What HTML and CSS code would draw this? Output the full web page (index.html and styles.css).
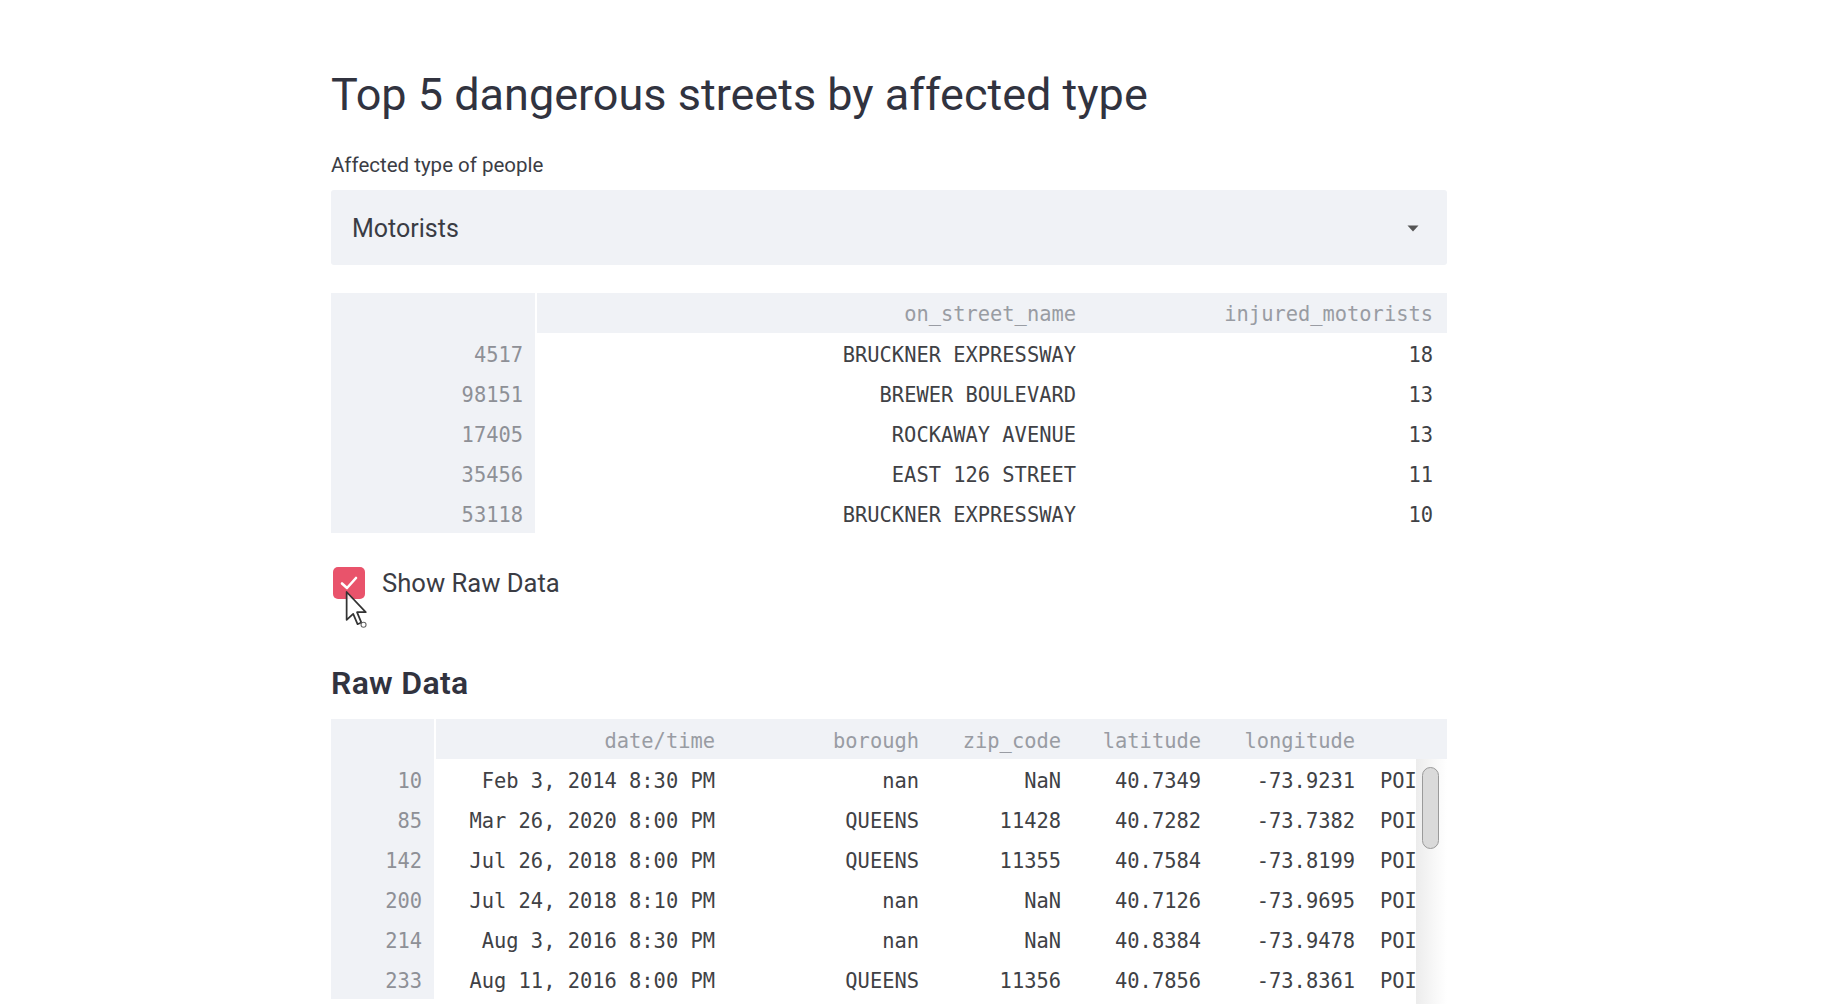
FILE: index.html
```html
<!DOCTYPE html>
<html>
<head>
<meta charset="utf-8">
<title>Top 5 dangerous streets</title>
<link rel="stylesheet" href="styles.css">
</head>
<body>
<main class="page">
  <h2 class="title">Top 5 dangerous streets by affected type</h2>
  <div class="label">Affected type of people</div>
  <div class="select">
    <span class="select-value">Motorists</span>
    <svg class="select-arrow" width="12" height="7" viewBox="0 0 12 7"><path d="M0.5 0.5 L11.5 0.5 L6 6.5 Z" fill="#555"/></svg>
  </div>

  <div class="table t1">
    <div class="row head">
      <div class="cell idx"></div>
      <div class="cell">on_street_name</div>
      <div class="cell">injured_motorists</div>
    </div>
    <div class="row"><div class="cell idx">4517</div><div class="cell">BRUCKNER EXPRESSWAY</div><div class="cell">18</div></div>
    <div class="row"><div class="cell idx">98151</div><div class="cell">BREWER BOULEVARD</div><div class="cell">13</div></div>
    <div class="row"><div class="cell idx">17405</div><div class="cell">ROCKAWAY AVENUE</div><div class="cell">13</div></div>
    <div class="row"><div class="cell idx">35456</div><div class="cell">EAST 126 STREET</div><div class="cell">11</div></div>
    <div class="row"><div class="cell idx">53118</div><div class="cell">BRUCKNER EXPRESSWAY</div><div class="cell">10</div></div>
  </div>

  <div class="check-row">
    <span class="checkbox">
      <svg width="20" height="16" viewBox="0 0 20 16"><path d="M3 8.5 L8 13 L17 3" fill="none" stroke="#fff" stroke-width="2.6" stroke-linecap="round" stroke-linejoin="round"/></svg>
    </span>
    <span class="check-label">Show Raw Data</span>
    <svg class="cursor" width="24" height="40" viewBox="0 0 22 36"><path d="M1.5 1.5 L1.5 27 L7.5 21.5 L11.5 31 L15 29.5 L11 20 L19 20 Z" fill="#fff" fill-opacity="0.85" stroke="#333" stroke-width="1.6" stroke-linejoin="round"/><circle cx="17" cy="31.5" r="2.3" fill="none" stroke="#666" stroke-width="1"/></svg>
  </div>

  <h3 class="subtitle">Raw Data</h3>

  <div class="table t2">
    <div class="row head">
      <div class="cell idx"></div>
      <div class="cell">date/time</div>
      <div class="cell">borough</div>
      <div class="cell">zip_code</div>
      <div class="cell">latitude</div>
      <div class="cell">longitude</div>
      <div class="cell"></div>
    </div>
    <div class="body-wrap">
      <div class="body">
        <div class="row"><div class="cell idx">10</div><div class="cell">Feb 3, 2014 8:30 PM</div><div class="cell">nan</div><div class="cell">NaN</div><div class="cell">40.7349</div><div class="cell">-73.9231</div><div class="cell left">POI</div></div>
        <div class="row"><div class="cell idx">85</div><div class="cell">Mar 26, 2020 8:00 PM</div><div class="cell">QUEENS</div><div class="cell">11428</div><div class="cell">40.7282</div><div class="cell">-73.7382</div><div class="cell left">POI</div></div>
        <div class="row"><div class="cell idx">142</div><div class="cell">Jul 26, 2018 8:00 PM</div><div class="cell">QUEENS</div><div class="cell">11355</div><div class="cell">40.7584</div><div class="cell">-73.8199</div><div class="cell left">POI</div></div>
        <div class="row"><div class="cell idx">200</div><div class="cell">Jul 24, 2018 8:10 PM</div><div class="cell">nan</div><div class="cell">NaN</div><div class="cell">40.7126</div><div class="cell">-73.9695</div><div class="cell left">POI</div></div>
        <div class="row"><div class="cell idx">214</div><div class="cell">Aug 3, 2016 8:30 PM</div><div class="cell">nan</div><div class="cell">NaN</div><div class="cell">40.8384</div><div class="cell">-73.9478</div><div class="cell left">POI</div></div>
        <div class="row"><div class="cell idx">233</div><div class="cell">Aug 11, 2016 8:00 PM</div><div class="cell">QUEENS</div><div class="cell">11356</div><div class="cell">40.7856</div><div class="cell">-73.8361</div><div class="cell left">POI</div></div>
      </div>
      <div class="scrollbar"><div class="thumb"></div></div>
    </div>
  </div>
</main>
</body>
</html>
```

FILE: styles.css
```css
html, body {
  margin: 0;
  padding: 0;
  height: 100%;
  overflow: hidden;
  background: #ffffff;
}

.page {
  width: 1116px;
  margin-left: 331px;
  padding-top: 68px;
  font-family: Roboto, "Noto Sans", sans-serif;
  color: #31333f;
}

.title {
  margin: 0;
  font-size: 45px;
  line-height: 54px;
  font-weight: 400;
  color: #31333f;
}

.label {
  margin-top: 31px;
  font-size: 20.5px;
  line-height: 24px;
  color: #3b3d45;
}

.select {
  margin-top: 13px;
  height: 75px;
  background: #f0f2f6;
  border-radius: 3px;
  display: flex;
  align-items: center;
  justify-content: space-between;
  padding: 2px 28px 0 21px;
  box-sizing: border-box;
}

.select-value {
  font-size: 25px;
  color: #3a3c44;
}

.table {
  font-family: "DejaVu Sans Mono", "Liberation Mono", monospace;
  font-size: 20.4px;
}

.t1 {
  margin-top: 28px;
}

.row {
  display: grid;
  height: 40px;
}

.t1 .row {
  grid-template-columns: 206px 553px 357px;
}

.cell {
  display: flex;
  align-items: center;
  justify-content: flex-end;
  padding-right: 14px;
  padding-top: 4px;
  box-sizing: border-box;
  white-space: nowrap;
  overflow: hidden;
  color: #404145;
}

.head .cell {
  padding-top: 2px;
  color: #999ca3;
}

.t2 .cell {
  padding-top: 3px;
}

.cell.idx {
  background: #f0f2f6;
  color: #8e9096;
  border-right: 2px solid #ffffff;
  padding-right: 12px;
}

.head {
  background: #f0f2f6;
}

.cell.left {
  justify-content: flex-start;
  padding-left: 11px;
  padding-right: 0;
}

.check-row {
  position: relative;
  margin-top: 34px;
  display: flex;
  align-items: center;
  height: 32px;
  padding-left: 2px;
}

.checkbox {
  width: 32px;
  height: 32px;
  border-radius: 5px;
  background: #e9536b;
  display: flex;
  align-items: center;
  justify-content: center;
}

.check-label {
  margin-left: 17px;
  font-size: 25.6px;
  color: #3a3c44;
}

.cursor {
  position: absolute;
  left: 14px;
  top: 23px;
}

.subtitle {
  margin: 66px 0 0 0;
  font-size: 32px;
  line-height: 36px;
  font-weight: 600;
  letter-spacing: 0.3px;
  color: #31333f;
}

.t2 {
  margin-top: 18px;
}

.t2 .row {
  grid-template-columns: 105px 293px 204px 142px 140px 154px 78px;
}

.t2 .body .row {
  grid-template-columns: 105px 293px 204px 142px 140px 154px 47px;
}

.body-wrap {
  display: flex;
  height: 300px;
}

.body {
  width: 1085px;
  overflow: hidden;
}

.scrollbar {
  width: 31px;
  background: linear-gradient(to right, #ececec, #f8f8f8 60%, #ffffff);
  position: relative;
}

.thumb {
  position: absolute;
  left: 6px;
  top: 8px;
  width: 15px;
  height: 80px;
  border-radius: 9px;
  background: #dadada;
  border: 1.5px solid #9a9a9a;
}
```
